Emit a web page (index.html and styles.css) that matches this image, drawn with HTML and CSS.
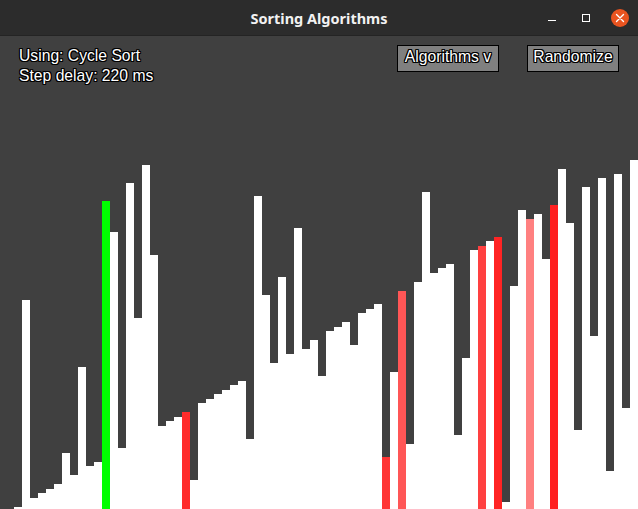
FILE: index.html
```html
<!DOCTYPE html>
<html lang="en">
<head>
<meta charset="utf-8">
<title>Sorting Algorithms</title>
<link rel="stylesheet" href="styles.css">
</head>
<body>
<div class="window">
  <header class="titlebar">
    <div class="title">Sorting Algorithms</div>
    <div class="controls">
      <span class="ctl"><svg width="18" height="18" viewBox="0 0 18 18"><rect x="5" y="11" width="8" height="1" fill="#ffffff"/></svg></span>
      <span class="ctl"><svg width="18" height="18" viewBox="0 0 18 18"><rect x="5.5" y="5.5" width="7" height="7" fill="none" stroke="#ffffff" stroke-width="1"/></svg></span>
      <span class="ctl"><svg width="18" height="18" viewBox="0 0 18 18"><circle cx="9" cy="9" r="9" fill="#e95420"/><path d="M5.5 5.5 L12.5 12.5 M12.5 5.5 L5.5 12.5" stroke="#ffffff" stroke-width="1.4" stroke-linecap="round"/></svg></span>
    </div>
  </header>
  <main class="content">
    <div class="hud">
      <div class="info">
        <div class="line">Using: Cycle Sort</div>
        <div class="line">Step delay: 220 ms</div>
      </div>
      <div class="buttons">
        <div class="btn btn-algos">Algorithms v</div>
        <div class="btn btn-rand">Randomize</div>
      </div>
    </div>
    <div class="bars">
      <div class="bar" style="height:0px"></div>
      <div class="bar" style="height:2px"></div>
      <div class="bar" style="height:209px"></div>
      <div class="bar" style="height:11px"></div>
      <div class="bar" style="height:16px"></div>
      <div class="bar" style="height:20px"></div>
      <div class="bar" style="height:25px"></div>
      <div class="bar" style="height:56px"></div>
      <div class="bar" style="height:34px"></div>
      <div class="bar" style="height:142px"></div>
      <div class="bar" style="height:43px"></div>
      <div class="bar" style="height:47px"></div>
      <div class="bar bar-green" style="height:308px"></div>
      <div class="bar" style="height:277px"></div>
      <div class="bar" style="height:61px"></div>
      <div class="bar" style="height:326px"></div>
      <div class="bar" style="height:191px"></div>
      <div class="bar" style="height:344px"></div>
      <div class="bar" style="height:254px"></div>
      <div class="bar" style="height:83px"></div>
      <div class="bar" style="height:88px"></div>
      <div class="bar" style="height:92px"></div>
      <div class="bar bar-red1" style="height:97px"></div>
      <div class="bar" style="height:29px"></div>
      <div class="bar" style="height:106px"></div>
      <div class="bar" style="height:110px"></div>
      <div class="bar" style="height:115px"></div>
      <div class="bar" style="height:119px"></div>
      <div class="bar" style="height:124px"></div>
      <div class="bar" style="height:128px"></div>
      <div class="bar" style="height:70px"></div>
      <div class="bar" style="height:313px"></div>
      <div class="bar" style="height:214px"></div>
      <div class="bar" style="height:146px"></div>
      <div class="bar" style="height:232px"></div>
      <div class="bar" style="height:155px"></div>
      <div class="bar" style="height:281px"></div>
      <div class="bar" style="height:160px"></div>
      <div class="bar" style="height:169px"></div>
      <div class="bar" style="height:133px"></div>
      <div class="bar" style="height:178px"></div>
      <div class="bar" style="height:182px"></div>
      <div class="bar" style="height:187px"></div>
      <div class="bar" style="height:164px"></div>
      <div class="bar" style="height:196px"></div>
      <div class="bar" style="height:200px"></div>
      <div class="bar" style="height:205px"></div>
      <div class="bar bar-red2" style="height:52px"></div>
      <div class="bar" style="height:137px"></div>
      <div class="bar bar-red3" style="height:218px"></div>
      <div class="bar" style="height:65px"></div>
      <div class="bar" style="height:227px"></div>
      <div class="bar" style="height:317px"></div>
      <div class="bar" style="height:236px"></div>
      <div class="bar" style="height:241px"></div>
      <div class="bar" style="height:245px"></div>
      <div class="bar" style="height:74px"></div>
      <div class="bar" style="height:151px"></div>
      <div class="bar" style="height:259px"></div>
      <div class="bar bar-red4" style="height:263px"></div>
      <div class="bar" style="height:268px"></div>
      <div class="bar bar-red5" style="height:272px"></div>
      <div class="bar" style="height:7px"></div>
      <div class="bar" style="height:223px"></div>
      <div class="bar" style="height:299px"></div>
      <div class="bar bar-pink" style="height:290px"></div>
      <div class="bar" style="height:295px"></div>
      <div class="bar" style="height:250px"></div>
      <div class="bar bar-red6" style="height:304px"></div>
      <div class="bar" style="height:340px"></div>
      <div class="bar" style="height:286px"></div>
      <div class="bar" style="height:79px"></div>
      <div class="bar" style="height:322px"></div>
      <div class="bar" style="height:173px"></div>
      <div class="bar" style="height:331px"></div>
      <div class="bar" style="height:38px"></div>
      <div class="bar" style="height:335px"></div>
      <div class="bar" style="height:101px"></div>
      <div class="bar" style="height:349px"></div>
    </div>
  </main>
</div>
</body>
</html>
```

FILE: styles.css
```css
html, body {
  margin: 0;
  padding: 0;
}
body {
  width: 638px;
  height: 509px;
  overflow: hidden;
  background: #404040;
}
.window {
  display: flex;
  flex-direction: column;
  height: 509px;
}
.titlebar {
  height: 35px;
  flex-shrink: 0;
  background: #2c2c2c;
  border-bottom: 1px solid #242424;
  display: grid;
  grid-template-columns: 1fr auto 1fr;
  align-items: center;
}
.title {
  grid-column: 2;
  font-family: "Noto Sans", "DejaVu Sans", sans-serif;
  font-weight: bold;
  font-size: 14.5px;
  color: #f2f2f2;
  padding-top: 1px;
}
.controls {
  grid-column: 3;
  justify-self: end;
  display: flex;
  gap: 16px;
  padding-right: 9px;
}
.ctl {
  width: 18px;
  height: 18px;
  display: block;
}
.ctl svg {
  display: block;
}
.content {
  flex: 1;
  display: flex;
  flex-direction: column;
  min-height: 0;
}
.hud {
  display: flex;
  justify-content: space-between;
  align-items: flex-start;
  padding: 9px 19px 0 19px;
  font-family: "Liberation Sans", Arial, sans-serif;
  font-size: 15.7px;
  line-height: 20px;
  color: #ffffff;
  text-shadow: 1px 0 0 #000, -1px 0 0 #000, 0 1px 0 #000, 0 -1px 0 #000,
    1px 1px 0 #000, -1px -1px 0 #000, 1px -1px 0 #000, -1px 1px 0 #000;
}
.info {
  padding-top: 1px;
}
.buttons {
  display: flex;
  gap: 28px;
}
.btn {
  box-sizing: border-box;
  height: 27px;
  border: 1px solid #000000;
  background: #808080;
  padding: 1px 0 4px;
  text-align: center;
  white-space: nowrap;
}
.btn-algos {
  width: 102px;
}
.btn-rand {
  width: 92px;
}
.bars {
  flex: 1;
  display: flex;
  align-items: flex-end;
  padding-left: 6px;
  overflow: hidden;
}
.bar {
  width: 8px;
  flex-shrink: 0;
  background: #ffffff;
}
.bar-green { background: #00ff00; }
.bar-red1 { background: #ff2b2b; }
.bar-red2 { background: #ff3535; }
.bar-red3 { background: #ff5656; }
.bar-red4 { background: #ff4040; }
.bar-red5 { background: #ff2424; }
.bar-red6 { background: #ff2020; }
.bar-pink { background: #ff8080; }
```
